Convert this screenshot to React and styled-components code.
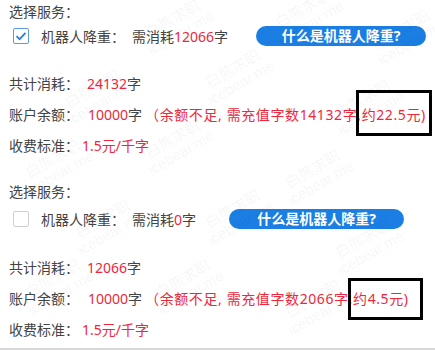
import React from "react";
import styled, { createGlobalStyle } from "styled-components";

const GlobalStyle = createGlobalStyle`
  html, body {
    margin: 0;
    padding: 0;
    background: #fff;
  }

  body {
    font-family: "Noto Sans", "Noto Sans CJK SC", sans-serif;
    font-size: 14px;
    color: #444;
  }
`;

const Page = styled.div`
  width: 435px;
  height: 350px;

  position: relative;
  overflow: hidden;

  border-bottom: 2px solid #d8d8d8;
  box-sizing: border-box;
`;

const Content = styled.div`
  padding: 1px 0 0 9px;

  display: flex;
  flex-direction: column;
`;

const Section = styled.div`
  display: flex;
  flex-direction: column;

  margin-bottom: ${(p) => p.$after || 0}px;
`;

const Title = styled.div`
  height: 22px;
  line-height: 22px;
`;

const ServiceRow = styled.div`
  height: ${(p) => p.$h}px;

  display: flex;
  align-items: center;

  margin-top: ${(p) => p.$top}px;
  margin-bottom: ${(p) => p.$bottom}px;

  white-space: nowrap;
`;

const Box = styled.span`
  width: 14px;
  height: 14px;
  flex-shrink: 0;

  margin-left: 4px;
  margin-right: 12px;

  border: 1px solid ${(p) => (p.$on ? "#5b9be0" : "#cfcfcf")};
  border-radius: 2px;

  display: flex;
  align-items: center;
  justify-content: center;
`;

const Cost = styled.span`
  margin-left: 7px;
`;

const Red = styled.span`
  color: #f0273a;
`;

const Pill = styled.button`
  width: ${(p) => p.$w}px;
  height: ${(p) => p.$h}px;
  flex-shrink: 0;

  margin-left: ${(p) => p.$left}px;
  padding: 0;

  border: none;
  border-radius: 12px;

  background-color: #1a7ee3;
  color: #fff;

  font-family: "Noto Sans", "Noto Sans CJK SC", sans-serif;
  font-size: 14px;
  font-weight: bold;
  line-height: 1;
`;

const Stat = styled.div`
  height: 31px;
  line-height: 31px;

  display: flex;
  white-space: nowrap;
`;

const Value = styled.span`
  margin-left: ${(p) => p.$gap}px;
  color: #f0273a;
`;

const Note = styled.span`
  margin-left: 3px;

  color: #f0273a;
  letter-spacing: ${(p) => p.$ls}px;
`;

const Marked = styled.span`
  position: relative;

  &::after {
    content: "";
    position: absolute;
    left: -1px;
    right: ${(p) => p.$r}px;
    top: ${(p) => p.$t}px;
    bottom: ${(p) => p.$b}px;

    border: 3px solid #000;
  }
`;

const Mark = styled.div`
  position: absolute;
  left: ${(p) => p.$x}px;
  top: ${(p) => p.$y}px;

  transform: rotate(-30deg);

  color: rgba(0, 0, 0, 0.05);
  font-family: "Liberation Sans", "Noto Sans CJK SC", sans-serif;
  font-size: 15px;
  line-height: 16px;
  text-align: center;

  pointer-events: none;
`;

const marks = [
  [140, 10], [270, 0], [370, 20],
  [60, 80], [200, 60], [330, 90],
  [20, 150], [140, 130], [280, 160],
  [70, 210], [200, 200], [330, 230],
  [20, 270], [150, 270], [280, 290],
];

const Check = () => (
  <svg width="12" height="10" viewBox="0 0 12 10">
    <path d="M1.5 5.2 L4.6 8.2 L10.5 1.8" fill="none" stroke="#2f7fd6" strokeWidth="1.8" />
  </svg>
);

const Block = ({ on, need, total, short, money, pill, rowTop, rowBottom, box }) => (
  <Section $after={box.after}>
    <Title>选择服务：</Title>
    <ServiceRow $h={pill.h + 6} $top={rowTop} $bottom={rowBottom}>
      <Box $on={on}>{on && <Check />}</Box>
      机器人降重：
      <Cost>
        需消耗<Red>{need}</Red>字
      </Cost>
      <Pill $w={pill.w} $h={pill.h} $left={pill.left}>
        什么是机器人降重?
      </Pill>
    </ServiceRow>
    <Stat>
      共计消耗：<Value $gap={8}>{total}</Value>字
    </Stat>
    <Stat>
      账户余额：<Value $gap={9}>10000</Value>字
      <Note $ls={box.ls}>
        （余额不足, 需充值字数{short}字
        <Marked $r={box.r} $t={box.t} $b={box.b}>,约{money}元)</Marked>
      </Note>
    </Stat>
    <Stat>
      收费标准：<Value $gap={3}>1.5元/千字</Value>
    </Stat>
  </Section>
);

const App = () => {
  return (
    <Page>
      <GlobalStyle />
      <Content>
        <Block
          on
          need="12066"
          total="24132"
          short="14132"
          money="22.5"
          pill={{ w: 170, h: 20, left: 28 }}
          rowTop={0}
          rowBottom={19}
          box={{ r: -6, t: -15, b: -12, after: 20, ls: 0.6 }}
        />
        <Block
          need="0"
          total="12066"
          short="2066"
          money="4.5"
          pill={{ w: 175, h: 20, left: 33 }}
          rowTop={3}
          rowBottom={20}
          box={{ r: -14, t: -11, b: -12, after: 0, ls: 0.6 }}
        />
      </Content>
      {marks.map(([x, y], i) => (
        <Mark key={i} $x={x} $y={y}>
          白熊求职
          <br />
          icebear.me
        </Mark>
      ))}
    </Page>
  );
};

export default App;
